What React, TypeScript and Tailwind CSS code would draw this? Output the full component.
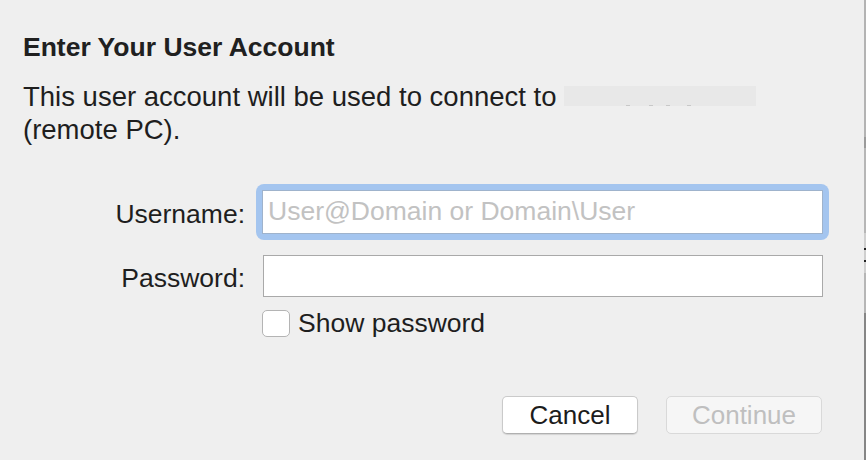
import React from "react";

export default function App() {
  const font = { fontFamily: '"Liberation Sans", Arial, Helvetica, sans-serif' };
  return (
    <div
      className="relative w-[866px] h-[460px] bg-[#efefef] overflow-hidden text-[#1e1e1e] antialiased"
      style={font}
    >
      {/* right window edge */}
      <div className="absolute right-0 top-0 w-[2px] h-[460px] flex flex-col">
        <div className="h-[137px] bg-[#b3b3b3]" />
        <div className="h-[11px] bg-[#9a9a9a]" />
        <div className="h-[85px] bg-[#b6b6b6]" />
        <div className="h-[40px] bg-[#cfcfcf] relative">
          <div className="absolute left-0 top-[15px] w-[2px] h-[2px] bg-[#222]" />
          <div className="absolute left-0 top-[27px] w-[2px] h-[2px] bg-[#222]" />
        </div>
        <div className="h-[40px] bg-[#b6b6b6]" />
        <div className="flex-1 bg-[#868686]" />
      </div>

      <div className="pl-[23px] pr-[44px] flex flex-col">
        <h1 className="mt-[32px] text-[26.5px] leading-[30px] font-bold text-[#202020]">
          Enter Your User Account
        </h1>
        <p className="mt-[18px] text-[27.5px] leading-[33px] text-[#1e1e1e]">
          This user account will be used to connect to{" "}
          <span className="inline-block w-[192px] h-[20px] bg-[#e8e8e8] relative align-baseline">
            <span className="absolute bottom-0 left-[62px] w-[4px] h-[1px] bg-[#c8c8c8]" />
            <span className="absolute bottom-0 left-[85px] w-[4px] h-[1px] bg-[#c8c8c8]" />
            <span className="absolute bottom-0 left-[102px] w-[4px] h-[1px] bg-[#c8c8c8]" />
            <span className="absolute bottom-0 left-[123px] w-[4px] h-[1px] bg-[#c8c8c8]" />
          </span>
          <br />
          (remote PC).
        </p>
      </div>

      {/* form */}
      <div className="mt-[38px] flex flex-col">
        <div className="flex items-start">
          <div className="w-[245px] mt-[7px] text-right text-[26.5px] leading-[46px]">Username:</div>
          <div className="ml-[11px] p-[6px] bg-[#a4c5ef] rounded-[8px]">
            <div className="w-[561px] h-[44px] bg-white border border-[#9fb3cc] flex items-center pl-[5px] text-[26.5px] text-[#c2c2c2]">
              User@Domain or Domain\User
            </div>
          </div>
        </div>

        <div className="mt-[15px] flex items-start h-[42px]">
          <div className="w-[245px] text-right text-[26.5px] leading-[46px]">Password:</div>
          <div className="ml-[18px] w-[560px] h-[42px] bg-white border border-[#a9a9a9]" />
        </div>

        <div className="mt-[13px] flex items-start pl-[262px]">
          <div className="w-[28px] h-[27px] bg-white border border-[#b4b4b4] rounded-[5px]" />
          <div className="ml-[8px] -mt-[1px] text-[26.5px] leading-[29px]">Show password</div>
        </div>
      </div>

      <div className="mt-[58px] flex justify-end pr-[44px] gap-[28px]">
        <button className="w-[136px] h-[38px] bg-white border border-[#cacaca] border-b-[#b0b0b0] rounded-[5px] shadow-[0_1px_1px_rgba(0,0,0,0.12)] text-[26px] leading-[36px] text-[#1c1c1c]">
          Cancel
        </button>
        <button className="w-[156px] h-[38px] bg-[#f6f6f6] border border-[#d9d9d9] rounded-[5px] text-[26px] leading-[36px] text-[#bfbfbf]">
          Continue
        </button>
      </div>
    </div>
  );
}
